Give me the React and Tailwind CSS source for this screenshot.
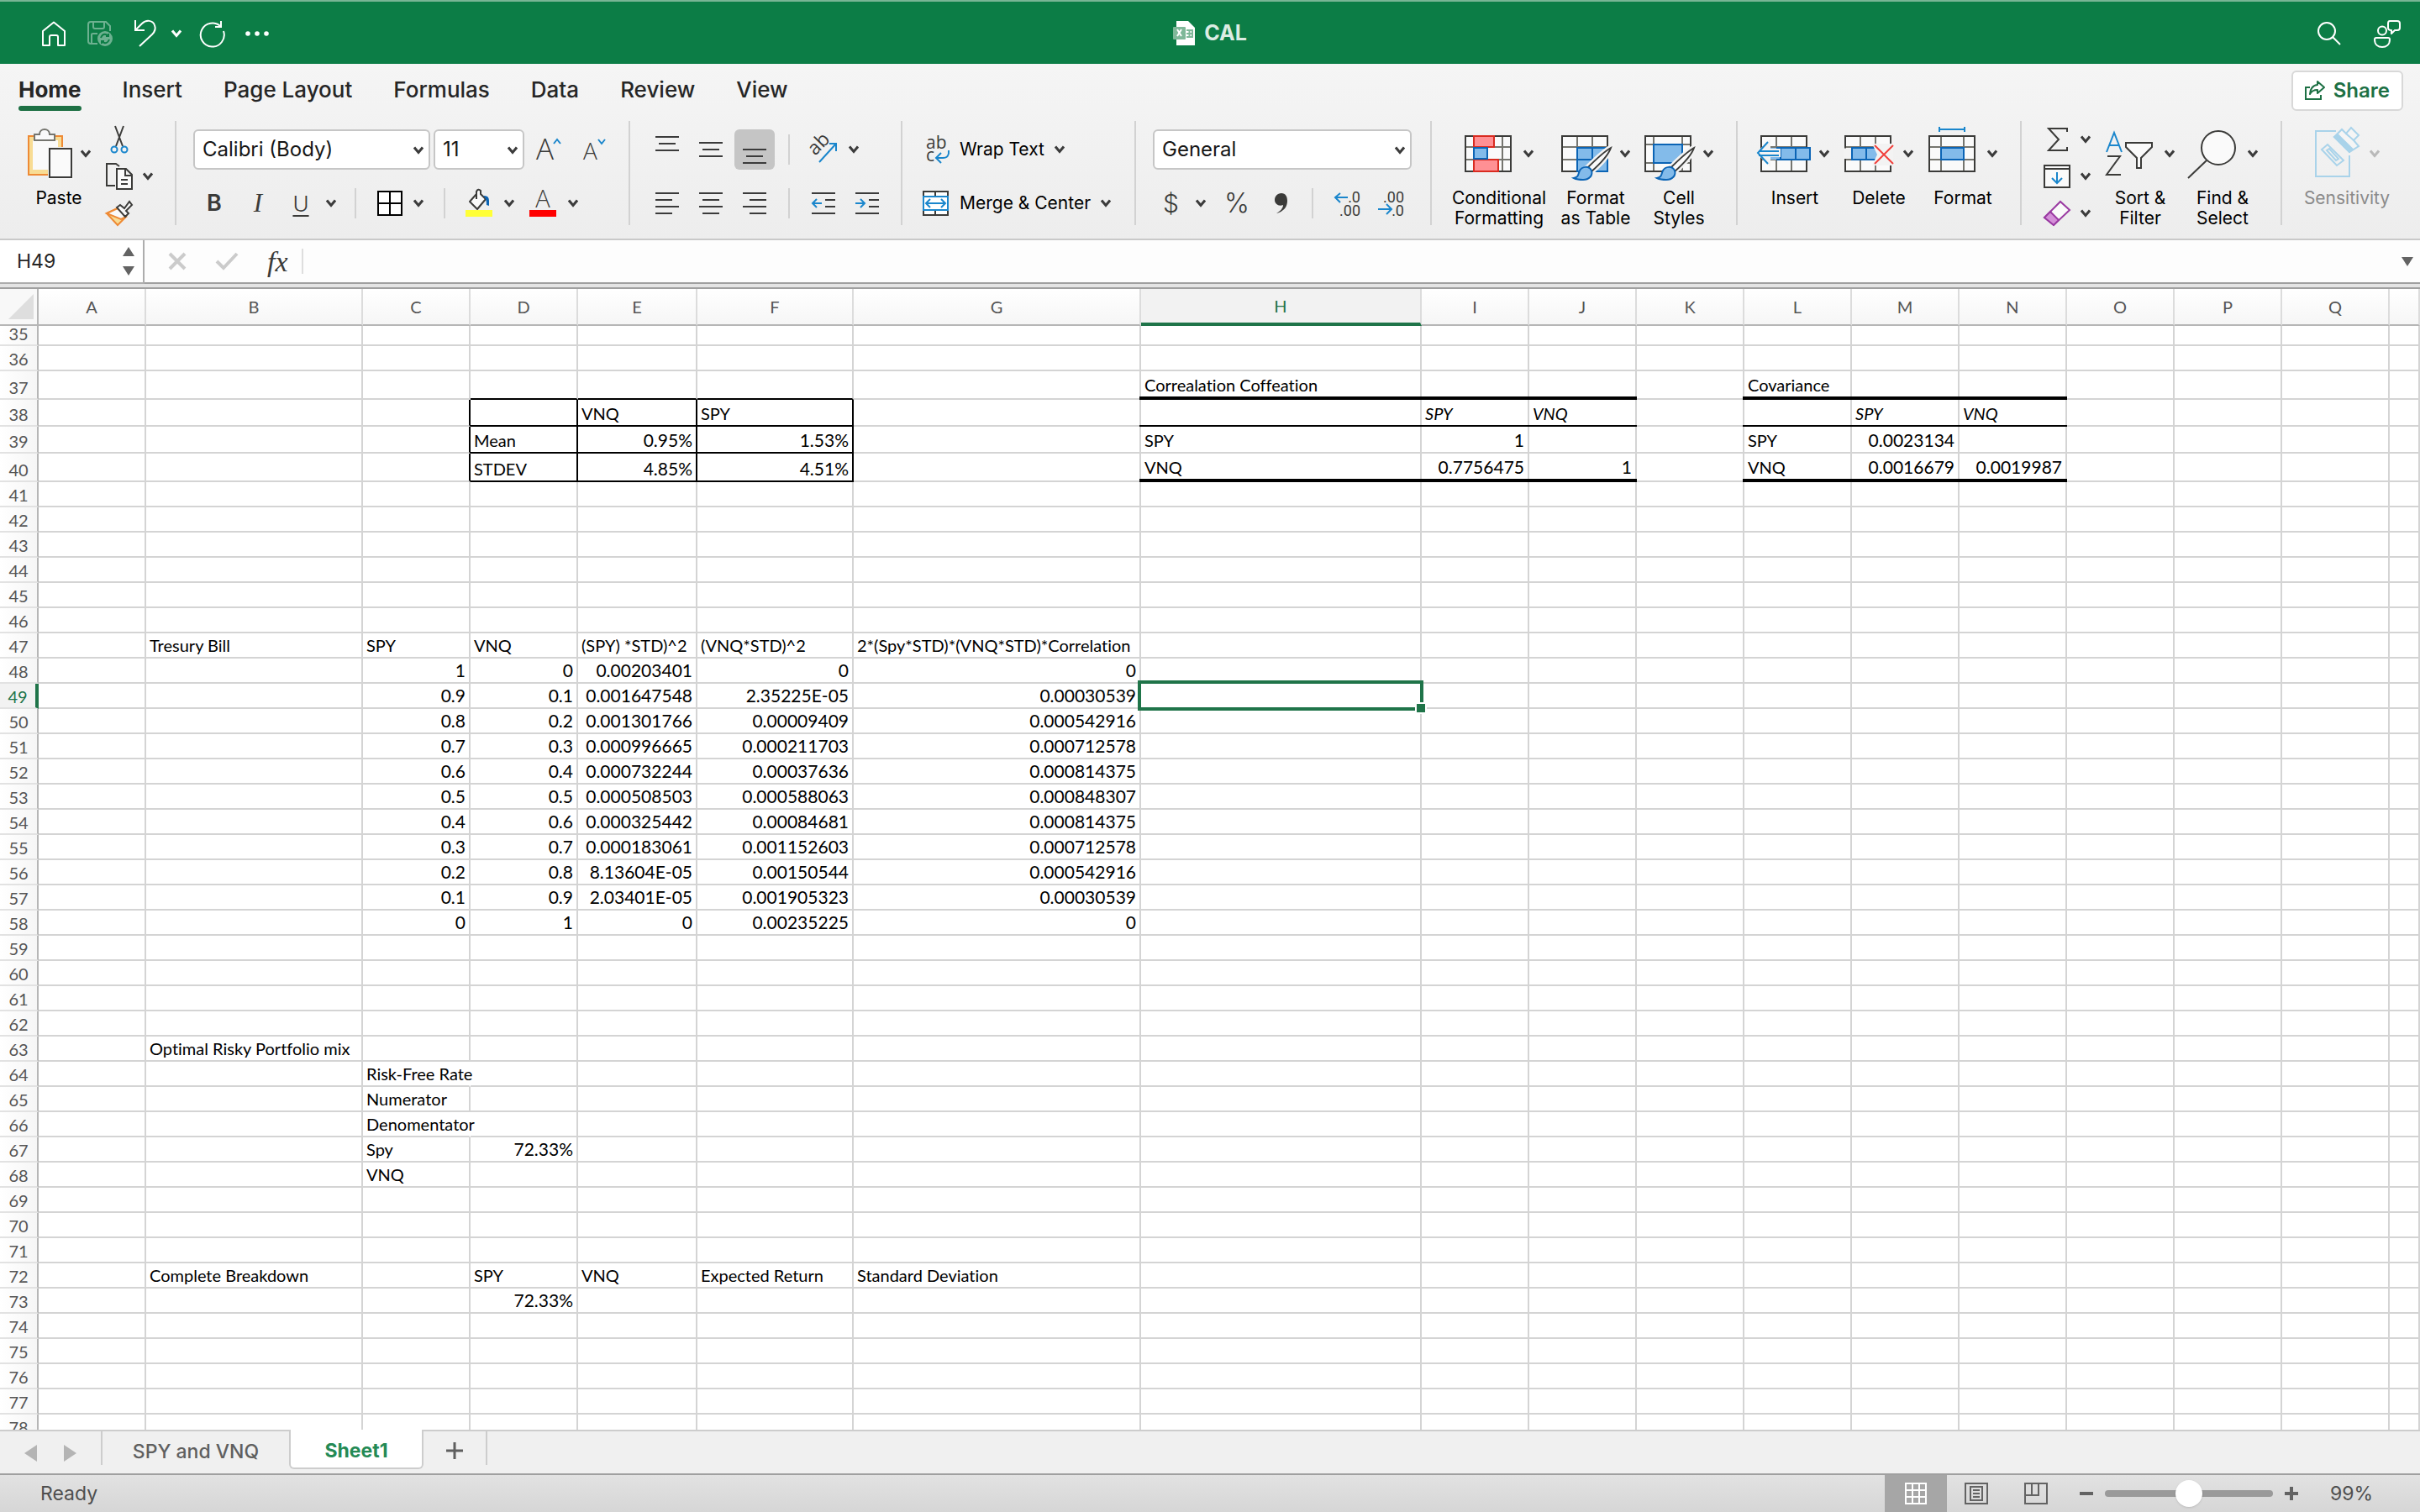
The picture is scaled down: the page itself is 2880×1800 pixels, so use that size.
import clsx from 'clsx';

const COLUMNS = 'ABCDEFGHIJKLMNOPQR'.split('');
const COL_WIDTHS = {
  A: 'w-[128px]', B: 'w-[258px]', C: 'w-[128px]', D: 'w-[128px]', E: 'w-[142px]', F: 'w-[186px]', G: 'w-[342px]', H: 'w-[334px]',
};

const ROWS = Array.from({ length: 44 }, (_, i) => i + 35);
const ROW_HEIGHTS = { 35: 'h-[24px]', 37: 'h-[34px]', 38: 'h-[32px]', 39: 'h-[32px]', 40: 'h-[34px]' };

const CELLS = {
  E38: 'VNQ', F38: 'SPY',
  D39: 'Mean', E39: '0.95%', F39: '1.53%',
  D40: 'STDEV', E40: '4.85%', F40: '4.51%',
  H37: 'Correalation Coffeation', I38: 'SPY', J38: 'VNQ',
  H39: 'SPY', I39: '1', H40: 'VNQ', I40: '0.7756475', J40: '1',
  L37: 'Covariance', M38: 'SPY', N38: 'VNQ',
  L39: 'SPY', M39: '0.0023134', L40: 'VNQ', M40: '0.0016679', N40: '0.0019987',
  B47: 'Tresury Bill', C47: 'SPY', D47: 'VNQ', E47: '(SPY) *STD)^2', F47: '(VNQ*STD)^2', G47: '2*(Spy*STD)*(VNQ*STD)*Correlation',
  B63: 'Optimal Risky Portfolio mix',
  C64: 'Risk-Free Rate', C65: 'Numerator', C66: 'Denomentator', C67: 'Spy', D67: '72.33%', C68: 'VNQ',
  B72: 'Complete Breakdown', D72: 'SPY', E72: 'VNQ', F72: 'Expected Return', G72: 'Standard Deviation', D73: '72.33%',
};

// weights table, rows 48 to 58, columns C to G
const WEIGHTS = [
  ['1', '0', '0.00203401', '0', '0'],
  ['0.9', '0.1', '0.001647548', '2.35225E-05', '0.00030539'],
  ['0.8', '0.2', '0.001301766', '0.00009409', '0.000542916'],
  ['0.7', '0.3', '0.000996665', '0.000211703', '0.000712578'],
  ['0.6', '0.4', '0.000732244', '0.00037636', '0.000814375'],
  ['0.5', '0.5', '0.000508503', '0.000588063', '0.000848307'],
  ['0.4', '0.6', '0.000325442', '0.00084681', '0.000814375'],
  ['0.3', '0.7', '0.000183061', '0.001152603', '0.000712578'],
  ['0.2', '0.8', '8.13604E-05', '0.00150544', '0.000542916'],
  ['0.1', '0.9', '2.03401E-05', '0.001905323', '0.00030539'],
  ['0', '1', '0', '0.00235225', '0'],
];
WEIGHTS.forEach((values, i) => {
  values.forEach((value, j) => {
    CELLS[`${'CDEFG'[j]}${48 + i}`] = value;
  });
});

const SELECTED = { col: 'H', row: 49 };
const SPILLS = ['C64', 'C66'];

function cellBorders(col, row) {
  const boxed = 'DEF'.includes(col);
  const stats = 'HIJLMN'.includes(col);
  let bottom = 'border-b-2 border-b-[#d4d4d4]';
  let right = 'border-r-2 border-r-[#d4d4d4]';
  if (boxed && row >= 37 && row <= 40) bottom = 'border-b-2 border-b-black';
  if ('CDEF'.includes(col) && row >= 38 && row <= 40) right = 'border-r-2 border-r-black';
  // the rules run over the vertical grid lines
  if (stats && (row === 37 || row === 40)) {
    bottom = 'relative border-b-4 border-b-black after:absolute after:-inset-x-[2px] after:-bottom-1 after:h-1 after:bg-black';
  }
  if (stats && row === 38) {
    bottom = 'relative border-b-2 border-b-black after:absolute after:-inset-x-[2px] after:-bottom-[2px] after:h-[2px] after:bg-black';
  }
  if (SPILLS.includes(`${col}${row}`)) right = 'border-r-2 border-r-transparent';
  return `${bottom} ${right}`;
}

function Chevron({ className = 'text-[#3b3b3b]' }) {
  return (
    <svg className={clsx('h-[10px] w-[12px] shrink-0', className)} viewBox="0 0 12 10" fill="none" stroke="currentColor" strokeWidth="3" aria-hidden="true">
      <path d="M1 1.5 6 7.5 11 1.5" />
    </svg>
  );
}

function Icon({ w, h, children, className }) {
  return (
    <svg width={w} height={h} viewBox={`0 0 ${w} ${h}`} fill="none" className={clsx('shrink-0 overflow-visible', className)} aria-hidden="true">
      {children}
    </svg>
  );
}

function Lines({ rows, shift = 0 }) {
  return (
    <Icon w={28} h={26}>
      {rows.map(([x1, x2], i) => (
        <path key={i} d={`M${x1} ${1 + i * 8 + shift}H${x2}`} stroke="#3b3b3b" strokeWidth="2" />
      ))}
    </Icon>
  );
}

function IconButton({ label, className, children }) {
  return (
    <button type="button" aria-label={label} className={clsx('flex shrink-0 items-center justify-center', className)}>
      {children}
    </button>
  );
}

function Separator() {
  return <div className="h-[124px] w-[2px] shrink-0 bg-[#d2d2d2]" />;
}

function SmallSeparator({ className }) {
  return <div className={clsx('h-9 w-[2px] shrink-0 bg-[#d2d2d2]', className)} />;
}

function Dropdown({ label, value, className }) {
  return (
    <div className={clsx('relative shrink-0', className)}>
      <select aria-label={label} defaultValue={value} className="h-12 w-full appearance-none rounded-md border-2 border-[#c6c6c6] bg-white pl-[9px] text-[24px] text-[#161616]">
        <option>{value}</option>
      </select>
      <Chevron className="pointer-events-none absolute top-5 right-2 text-[#3b3b3b]" />
    </div>
  );
}

function BigButton({ lines, icon, width, disabled }) {
  return (
    <button type="button" disabled={disabled} className={clsx('flex shrink-0 flex-col items-center', width, disabled ? 'text-[#8a8a8a]' : 'text-black')}>
      <span className="flex h-[78px] items-center gap-[14px]">
        {icon}
        <Chevron className={disabled ? 'text-[#b9b9b9]' : 'text-[#3b3b3b]'} />
      </span>
      <span className="flex flex-col items-center pt-[2px]">
        {lines.map(line => (
          <span key={line} className="text-[21px] leading-6 whitespace-nowrap">{line}</span>
        ))}
      </span>
    </button>
  );
}

// 56x44 sheet grid shared by the table-like icons
function GridBase({ cols = [19, 37], lines = [26, 41] }) {
  return (
    <>
      <rect x="1" y="13" width="54" height="42" fill="#fafafa" />
      <path d={`${cols.map(x => `M${x} 13V55`).join('')}${lines.map(y => `M1 ${y}H55`).join('')}`} stroke="#75756f" strokeWidth="2" />
      <rect x="1" y="13" width="54" height="42" stroke="#3b3b39" strokeWidth="2" />
    </>
  );
}

function Brush() {
  return (
    <>
      <path d="M59 27C50 32 35 47 30 52l5 4c8-7 21-20 24-29Z" fill="#fafafa" stroke="#f3f3f3" strokeWidth="7" />
      <path d="M59 27C50 32 35 47 30 52l5 4c8-7 21-20 24-29Z" fill="#fafafa" stroke="#3b3b39" strokeWidth="2" />
      <path d="M15 63c6-1 5-5 7-9 3-5 11-6 14 0 2 6-3 11-10 11-5 0-9-1-11-2Z" fill="#83bbea" stroke="#0b64b5" strokeWidth="2" />
    </>
  );
}

const icons = {
  home: (
    <Icon w={28} h={30}>
      <path d="M1 29V12L14 1.500 27 12V29H19V19q0-2-2-2h-6q-2 0-2 2V29Z" stroke="#fff" strokeWidth="2" strokeLinejoin="round" />
    </Icon>
  ),
  save: (
    <Icon w={30} h={30} className="opacity-40">
      <path d="M12 27H4q-3 0-3-3V4q0-3 3-3H22l5 5V12M7 1V7q0 2 2 2h9q2 0 2-2V1M5 27V16q0-1 2-1h5" stroke="#fff" strokeWidth="2" />
      <circle cx="21" cy="21" r="9" fill="#fff" />
      <path d="M16 20q2-5 6-4l3 2m0-3v3h-3M26 22q-2 5-6 4l-3-2m0 3v-3h3" stroke="#0c7d46" strokeWidth="2" />
    </Icon>
  ),
  undo: (
    <Icon w={26} h={32}>
      <path d="M1 0V12H12M1 12 9 4C14-1 22 0 24 6c2 5 0 8-3 11L6 31" stroke="#fff" strokeWidth="2" />
    </Icon>
  ),
  redo: (
    <Icon w={32} h={32}>
      <path d="M20 8h7V1M27 8A14 14 0 1 0 30 13" stroke="#fff" strokeWidth="2" />
    </Icon>
  ),
  dots: (
    <Icon w={28} h={6}>
      {[3, 14, 25].map(x => <circle key={x} cx={x} cy="3" r="2.800" fill="#fff" />)}
    </Icon>
  ),
  workbook: (
    <Icon w={26} h={30}>
      <path d="M4 0H18L26 8V29H4Z" fill="#fff" />
      <path d="M16 11h7v8h-7M16 15h7M19.500 11v8" stroke="#7fb899" strokeWidth="2" />
      <rect x="0" y="7" width="15" height="15" rx="1" fill="#7fb899" />
      <path d="M5 10l5 8M10 10l-5 8" stroke="#fff" strokeWidth="2" />
    </Icon>
  ),
  search: (
    <Icon w={28} h={28}>
      <circle cx="11" cy="11" r="10" stroke="#fff" strokeWidth="2" />
      <path d="M18 18 27 27" stroke="#fff" strokeWidth="2" />
    </Icon>
  ),
  person: (
    <Icon w={34} h={33}>
      <circle cx="11" cy="12.500" r="5" stroke="#fff" strokeWidth="2" />
      <path d="M4 21H18q2 0 2 2c0 6-4 9-9 9s-9-3-9-9q0-2 2-2ZM20 1h9q3 0 3 3v5q0 3-3 3h-3l-4 4V12q-4 0-4-3V4q0-3 2-3Z" stroke="#fff" strokeWidth="2" strokeLinejoin="round" />
    </Icon>
  ),
  share: (
    <Icon w={24} h={24}>
      <path d="M6 8H1V22H19V17" stroke="#1d7044" strokeWidth="2" />
      <path d="M15 1l8 7-8 7V11c-4 0-7 1-9 5 0-6 4-11 9-11Z" stroke="#1d7044" strokeWidth="2" strokeLinejoin="round" />
    </Icon>
  ),
  paste: (
    <Icon w={50} h={62}>
      <rect x="2" y="10" width="40" height="46" fill="#f8dc94" stroke="#ee8a35" strokeWidth="2" />
      <rect x="7" y="15" width="30" height="35" fill="#fafafa" />
      <path d="M9 15V8h6c0-8 12-8 12 0h6v7Z" fill="#fafafa" stroke="#75756f" strokeWidth="2" />
      <path d="M25 23H56V62H25Z" fill="#f3f3f3" />
      <rect x="27" y="25" width="26" height="34" fill="#fafafa" stroke="#3b3b39" strokeWidth="2" />
    </Icon>
  ),
  cut: (
    <Icon w={20} h={32}>
      <path d="M5 0 14 24M15 0 6 24" stroke="#3b3b39" strokeWidth="2" />
      <circle cx="4" cy="28" r="3.500" stroke="#1a86cc" strokeWidth="2" />
      <circle cx="16" cy="28" r="3.500" stroke="#1a86cc" strokeWidth="2" />
    </Icon>
  ),
  copy: (
    <Icon w={32} h={32}>
      <path d="M11 27H1V1H12L16 4" stroke="#3b3b39" strokeWidth="2" />
      <path d="M13 7H24L31 14V31H13ZM23 7V15H31M18 20h8M18 25h8" fill="#fafafa" stroke="#3b3b39" strokeWidth="2" />
    </Icon>
  ),
  painter: (
    <Icon w={32} h={30}>
      <path d="M1 15 14 9 24 19 14 29Z" fill="#f8dc94" stroke="#ee8a35" strokeWidth="2" />
      <path d="M1 15 14 9 24 19 18 22Z" fill="#fafafa" stroke="#ee8a35" strokeWidth="2" />
      <path d="M13 8l4-3 5 4L28 1l3 4-7 7 3 3-4 4Z" fill="#fafafa" stroke="#3b3b39" strokeWidth="2" />
    </Icon>
  ),
  grow: (
    <Icon w={30} h={28}>
      <text x="0" y="26" fontSize="35" fontWeight="300" fontFamily="Open Sans, sans-serif" fill="#3b3b39">A</text>
      <path d="M21 7 25 2 29 7" stroke="#1a86cc" strokeWidth="2" />
    </Icon>
  ),
  shrink: (
    <Icon w={28} h={28}>
      <text x="0" y="26" fontSize="28" fontWeight="300" fontFamily="Open Sans, sans-serif" fill="#3b3b39">A</text>
      <path d="M18 2 22 7 26 2" stroke="#1a86cc" strokeWidth="2" />
    </Icon>
  ),
  borders: (
    <Icon w={32} h={30}>
      <path d="M2 1H30V29H2ZM16 1V29M2 15H30" fill="#fff" stroke="#000" strokeWidth="2" />
    </Icon>
  ),
  fill: (
    <Icon w={32} h={34}>
      <path d="M13 6 5 15 14 24 24 12 18 6V2q-3-3-5 1v9" fill="#fafafa" stroke="#3b3b39" strokeWidth="2" strokeLinejoin="round" />
      <path d="M21 8q7-1 7 6v6l-3-1q0-6-2-9Z" fill="#0b64b5" />
      <rect x="0" y="25" width="32" height="8" fill="#ffff37" />
    </Icon>
  ),
  fontColor: (
    <Icon w={32} h={34}>
      <text x="16" y="22" textAnchor="middle" fontSize="29" fontWeight="300" fontFamily="Open Sans, sans-serif" fill="#3b3b39">A</text>
      <rect x="0" y="25" width="32" height="8" fill="#f00" />
    </Icon>
  ),
  orientation: (
    <Icon w={32} h={32}>
      <text x="6" y="24" fontSize="23" fontFamily="Open Sans, sans-serif" fill="#3b3b39" transform="rotate(-45 6 24)">ab</text>
      <path d="M11 31 31 9M23 9h8v9" stroke="#1a86cc" strokeWidth="2" />
    </Icon>
  ),
  outdent: (
    <Icon w={28} h={26}>
      <path d="M0 1H28M16 9H28M16 17H28M0 25H28" stroke="#3b3b3b" strokeWidth="2" />
      <path d="M12 13H1M6 8 1 13 6 18" stroke="#1a86cc" strokeWidth="2" />
    </Icon>
  ),
  indent: (
    <Icon w={28} h={26}>
      <path d="M0 1H28M16 9H28M16 17H28M0 25H28" stroke="#3b3b3b" strokeWidth="2" />
      <path d="M0 13H11M6 8l5 5-5 5" stroke="#1a86cc" strokeWidth="2" />
    </Icon>
  ),
  wrap: (
    <Icon w={32} h={32}>
      <text fontSize="21" fontFamily="Open Sans, sans-serif" fill="#3b3b39">
        <tspan x="4" y="15">ab</tspan>
        <tspan x="4" y="30">c</tspan>
      </text>
      <path d="M31 17q1 9-7 9h-7M22 20l-6 6 6 6" stroke="#1a86cc" strokeWidth="2" />
    </Icon>
  ),
  merge: (
    <Icon w={32} h={30}>
      <path d="M1 1H30V29H1ZM15 1V7M15 23V29" fill="#fff" stroke="#3b3b39" strokeWidth="2" />
      <rect x="1" y="7" width="29" height="16" fill="#fff" stroke="#1a86cc" strokeWidth="2" />
      <path d="M5 15H26M9 10l-5 5 5 5M22 10l5 5-5 5" stroke="#1a86cc" strokeWidth="2" />
    </Icon>
  ),
  comma: (
    <Icon w={16} h={26}>
      <path d="M8 1c5 0 7 4 7 9 0 8-5 13-13 15 5-3 8-6 8-10-5 2-10-1-10-6 0-4 3-8 8-8Z" fill="#3b3b39" />
    </Icon>
  ),
  moreDecimals: (
    <Icon w={32} h={32}>
      <g fontSize="18" fontFamily="Roboto, sans-serif" fill="#3b3b39" textAnchor="end">
        <text x="32" y="15">.0</text>
        <text x="32" y="31">.00</text>
      </g>
      <path d="M17 9H2M8 4 2 9l6 6" stroke="#1a86cc" strokeWidth="2" />
    </Icon>
  ),
  lessDecimals: (
    <Icon w={32} h={32}>
      <g fontSize="18" fontFamily="Roboto, sans-serif" fill="#3b3b39" textAnchor="end">
        <text x="32" y="15">.00</text>
        <text x="32" y="31">.0</text>
      </g>
      <path d="M1 23H16M11 17l6 6-6 6" stroke="#1a86cc" strokeWidth="2" />
    </Icon>
  ),
  conditional: (
    <Icon w={56} h={68}>
      <GridBase cols={[11, 45]} />
      <path d="M11 13H35V26H11ZM11 41H40V55H11Z" fill="#ff9094" stroke="#d92b20" strokeWidth="2" />
      <path d="M11 27H27V40H11Z" fill="#83bbea" stroke="#0b64b5" strokeWidth="2" />
    </Icon>
  ),
  formatTable: (
    <Icon w={56} h={68}>
      <GridBase />
      <path d="M19 27H55V55H19ZM37 27V55M19 41H55" fill="#83bbea" stroke="#0b64b5" strokeWidth="2" />
      <Brush />
    </Icon>
  ),
  cellStyles: (
    <Icon w={56} h={68}>
      <GridBase cols={[11, 45]} lines={[23, 45]} />
      <rect x="11" y="23" width="34" height="22" fill="#83bbea" stroke="#0b64b5" strokeWidth="2" />
      <Brush />
    </Icon>
  ),
  insert: (
    <Icon w={56} h={68}>
      <GridBase />
      <path d="M10 27H59V41H10Z" fill="#83bbea" />
      <path d="M19 27H59V41H19M24 27V41M42 27V41" stroke="#0b64b5" strokeWidth="2" />
      <path d="M12 16-5 33 12 50V38H24V28H12Z" fill="#f3f3f3" />
      <path d="M9 20-3 33 9 46M-2 31H22M-2 36H22" stroke="#1a86cc" strokeWidth="2" />
    </Icon>
  ),
  remove: (
    <Icon w={56} h={68}>
      <GridBase />
      <path d="M-1 27.500H10V40H-1Z" fill="#f3f3f3" />
      <path d="M9 27H40V41H9ZM26 27V41" fill="#83bbea" stroke="#0b64b5" strokeWidth="2" />
      <path d="M33 22H58V48H33L39 35Z" fill="#f3f3f3" />
      <path d="M36 24 58 46M58 24 36 46" stroke="#f0403c" strokeWidth="2" />
    </Icon>
  ),
  format: (
    <Icon w={56} h={68}>
      <GridBase cols={[15, 42]} />
      <rect x="15" y="27" width="27" height="14" fill="#83bbea" stroke="#0b64b5" strokeWidth="2" />
      <path d="M13 5H43M13 2V8M43 2V8" stroke="#1a86cc" strokeWidth="2" />
    </Icon>
  ),
  sum: (
    <Icon w={32} h={30}>
      <path d="M28 6V2H6L18 15 6 28H28V24" stroke="#3b3b39" strokeWidth="2" />
    </Icon>
  ),
  fillDown: (
    <Icon w={32} h={28}>
      <path d="M1 1H31V27H1ZM1 5H31" fill="#fafafa" stroke="#3b3b39" strokeWidth="2" />
      <path d="M16 9V22M10 16l6 6 6-6" stroke="#1a86cc" strokeWidth="2" />
    </Icon>
  ),
  clear: (
    <Icon w={32} h={30}>
      <path d="M1 20 20 1 31 11 12 29Z" fill="#fafafa" stroke="#9a3aa2" strokeWidth="2" />
      <path d="M1 20 8 13 18 23 12 29Z" fill="#d48fd8" stroke="#9a3aa2" strokeWidth="2" />
    </Icon>
  ),
  sort: (
    <Icon w={56} h={68}>
      <path d="M1 32 10 9 19 32M4 24H16" stroke="#1a86cc" strokeWidth="2" />
      <path d="M2 37H17L1 59H18" stroke="#3b3b39" strokeWidth="2" />
      <path d="M24 21H55V26L42 39V51H37V39L24 26Z" fill="#fafafa" stroke="#3b3b39" strokeWidth="2" />
    </Icon>
  ),
  find: (
    <Icon w={58} h={68}>
      <circle cx="37" cy="27" r="20" fill="#fafafa" stroke="#3b3b39" strokeWidth="2" />
      <path d="M23 42 1 63" stroke="#3b3b39" strokeWidth="2" />
    </Icon>
  ),
  sensitivity: (
    <Icon w={52} h={68}>
      <path d="M26 7H2V61H42V36" stroke="#a9d3ea" strokeWidth="2" />
      <path d="M9 29 16 23 35 42 27 48ZM15 30 18 28 29 40 26 42Z" stroke="#a9d3ea" strokeWidth="2" />
      <path d="M24 14 33 5 38 10 44 3 53 12 47 18 53 25 42 32Z" fill="#f5f5f5" stroke="#a9d3ea" strokeWidth="2" />
      <path d="M24 14 28 11 46 29 42 32ZM38 10 47 18" fill="#a9d3ea" stroke="#a9d3ea" strokeWidth="2" />
    </Icon>
  ),
};

const TABS = ['Home', 'Insert', 'Page Layout', 'Formulas', 'Data', 'Review', 'View'];

function TitleBar() {
  return (
    <header className="grid h-[76px] shrink-0 grid-cols-[1fr_auto_1fr] items-center border-t-2 border-[#79b595] bg-[#0c7d46] pt-[2px]">
      <div className="flex items-center pl-[50px]">
        <IconButton label="Home">{icons.home}</IconButton>
        <IconButton label="Save" className="ml-[26px]">{icons.save}</IconButton>
        <IconButton label="Undo" className="ml-[26px] gap-[18px]">{icons.undo}<Chevron className="text-white" /></IconButton>
        <IconButton label="Redo" className="ml-5">{icons.redo}</IconButton>
        <IconButton label="More" className="ml-6">{icons.dots}</IconButton>
      </div>
      <h1 className="flex items-center gap-[11px] text-[25px] font-bold text-[#dcece3]">{icons.workbook}CAL</h1>
      <div className="flex items-center justify-end gap-[38px] pr-[22px]">
        <IconButton label="Search">{icons.search}</IconButton>
        <IconButton label="Comments">{icons.person}</IconButton>
      </div>
    </header>
  );
}

function RibbonTabs() {
  return (
    <div className="flex h-[64px] shrink-0 items-start justify-between pr-5 pl-[22px]">
      <nav className="flex gap-[49px]">
        {TABS.map((tab, i) => (
          <button
            key={tab}
            type="button"
            className={clsx('relative h-[60px] text-[26px] text-[#262626]', i === 0 ? 'font-bold' : 'font-medium')}
          >
            {tab}
            {i === 0 && <span className="absolute inset-x-0 bottom-1 h-[6px] rounded-full bg-[#1d7044]" />}
          </button>
        ))}
      </nav>
      <button type="button" className="mt-2 flex h-12 items-center gap-[10px] rounded-md border-2 border-[#d8d8d8] bg-white px-[14px] text-[24px] font-semibold text-[#1d7044]">
        {icons.share}Share
      </button>
    </div>
  );
}

function Ribbon() {
  return (
    <div className="flex h-[146px] shrink-0 items-start border-b-2 border-[#c9c9c9] pt-1">
      <div className="flex w-[208px] shrink-0 pl-[23px]">
        <BigButton lines={['Paste']} icon={icons.paste} width="w-[94px]" />
        <div className="ml-[9px] flex flex-col">
          <IconButton label="Cut" className="h-[44px] w-8">{icons.cut}</IconButton>
          <IconButton label="Copy" className="h-[44px] gap-3">{icons.copy}<Chevron /></IconButton>
          <IconButton label="Format Painter" className="h-[44px] w-8">{icons.painter}</IconButton>
        </div>
      </div>
      <Separator />

      <div className="flex w-[538px] shrink-0 flex-col gap-4 pt-[10px]">
        <div className="flex items-center pl-5">
          <Dropdown label="Font" value="Calibri (Body)" className="w-[282px]" />
          <Dropdown label="Font size" value="11" className="ml-1 w-[108px]" />
          <IconButton label="Increase font size" className="ml-[14px]">{icons.grow}</IconButton>
          <IconButton label="Decrease font size" className="ml-[26px]">{icons.shrink}</IconButton>
        </div>
        <div className="flex h-12 items-center pl-[19px] text-[#3b3b39]">
          <IconButton label="Bold" className="w-[52px] text-[27px] font-semibold">B</IconButton>
          <IconButton label="Italic" className="w-[52px] font-['Liberation_Serif',serif] text-[31px] italic">I</IconButton>
          <IconButton label="Underline" className="w-[50px] text-[26px] font-light underline decoration-2 underline-offset-4">U</IconButton>
          <IconButton label="Underline style" className="w-[22px]"><Chevron /></IconButton>
          <SmallSeparator className="ml-[17px]" />
          <IconButton label="Borders" className="ml-6 gap-3">{icons.borders}<Chevron /></IconButton>
          <SmallSeparator className="ml-6" />
          <IconButton label="Fill color" className="ml-6 gap-[14px]">{icons.fill}<Chevron /></IconButton>
          <IconButton label="Font color" className="ml-[18px] gap-[14px]">{icons.fontColor}<Chevron /></IconButton>
        </div>
      </div>
      <Separator />

      <div className="flex w-[322px] shrink-0 flex-col gap-4 pt-[10px] pl-5">
        <div className="flex h-12 items-center gap-1">
          <IconButton label="Top align" className="h-12 w-12"><Lines rows={[[0, 28], [4, 24], [0, 28]]} shift={-3} /></IconButton>
          <IconButton label="Middle align" className="h-12 w-12"><Lines rows={[[0, 28], [4, 24], [0, 28]]} shift={4} /></IconButton>
          <IconButton label="Bottom align" className="h-12 w-12 rounded-md bg-[#c5c5c5]"><Lines rows={[[0, 28], [4, 24], [0, 28]]} shift={12} /></IconButton>
          <SmallSeparator className="ml-3" />
          <IconButton label="Orientation" className="ml-5 gap-[14px]">{icons.orientation}<Chevron /></IconButton>
        </div>
        <div className="flex h-12 items-center gap-1">
          <IconButton label="Align left" className="h-12 w-12"><Lines rows={[[0, 28], [0, 20], [0, 28], [0, 20]]} /></IconButton>
          <IconButton label="Center" className="h-12 w-12"><Lines rows={[[0, 28], [4, 24], [0, 28], [4, 24]]} /></IconButton>
          <IconButton label="Align right" className="h-12 w-12"><Lines rows={[[0, 28], [8, 28], [0, 28], [8, 28]]} /></IconButton>
          <SmallSeparator className="ml-3" />
          <IconButton label="Decrease indent" className="ml-3 h-12 w-12">{icons.outdent}</IconButton>
          <IconButton label="Increase indent" className="h-12 w-12">{icons.indent}</IconButton>
        </div>
      </div>
      <Separator />

      <div className="flex w-[276px] shrink-0 flex-col items-start gap-4 pt-[10px] pl-6 text-[21px] text-black">
        <button type="button" className="flex h-12 items-center gap-3 whitespace-nowrap">{icons.wrap}Wrap Text<Chevron /></button>
        <button type="button" className="flex h-12 items-center gap-3 whitespace-nowrap">{icons.merge}Merge &amp; Center<Chevron /></button>
      </div>
      <Separator />

      <div className="flex w-[350px] shrink-0 flex-col gap-4 pt-[10px] pl-5">
        <Dropdown label="Number format" value="General" className="w-[308px]" />
        <div className="flex h-12 items-center pl-3 text-[#3b3b39]">
          <IconButton label="Currency" className="gap-5 text-[30px] font-light">$<Chevron /></IconButton>
          <IconButton label="Percent" className="ml-5 w-[34px] text-[32px] font-light">%</IconButton>
          <IconButton label="Comma style" className="ml-7">{icons.comma}</IconButton>
          <SmallSeparator className="ml-7" />
          <IconButton label="Increase decimal" className="ml-6">{icons.moreDecimals}</IconButton>
          <IconButton label="Decrease decimal" className="ml-5">{icons.lessDecimals}</IconButton>
        </div>
      </div>
      <Separator />

      <div className="flex w-[362px] shrink-0 items-start pl-[22px]">
        <BigButton lines={['Conditional', 'Formatting']} icon={icons.conditional} width="w-[116px]" />
        <BigButton lines={['Format', 'as Table']} icon={icons.formatTable} width="w-[114px]" />
        <BigButton lines={['Cell', 'Styles']} icon={icons.cellStyles} width="w-[84px]" />
      </div>
      <Separator />

      <div className="flex w-[336px] shrink-0 items-start pl-[18px]">
        <BigButton lines={['Insert']} icon={icons.insert} width="w-[100px]" />
        <BigButton lines={['Delete']} icon={icons.remove} width="w-[100px]" />
        <BigButton lines={['Format']} icon={icons.format} width="w-[100px]" />
      </div>
      <Separator />

      <div className="flex w-[308px] shrink-0 items-start pl-[26px]">
        <div className="flex flex-col">
          <IconButton label="AutoSum" className="h-[44px] gap-3">{icons.sum}<Chevron /></IconButton>
          <IconButton label="Fill" className="h-[44px] gap-3">{icons.fillDown}<Chevron /></IconButton>
          <IconButton label="Clear" className="h-[44px] gap-3">{icons.clear}<Chevron /></IconButton>
        </div>
        <BigButton lines={['Sort &', 'Filter']} icon={icons.sort} width="ml-[10px] w-[98px]" />
        <BigButton lines={['Find &', 'Select']} icon={icons.find} width="w-[98px]" />
      </div>
      <Separator />

      <div className="flex shrink-0 items-start pl-[22px]">
        <BigButton lines={['Sensitivity']} icon={icons.sensitivity} width="w-[110px]" disabled />
      </div>
    </div>
  );
}

function FormulaBar() {
  return (
    <div className="flex h-[58px] shrink-0 items-stretch border-b-2 border-[#a0a0a0] bg-[#e4e4e4] pb-1">
      <div className="flex w-[172px] shrink-0 items-center justify-between border-r-2 border-b-2 border-[#adadad] bg-white pr-[10px]">
        <input aria-label="Name box" defaultValue="H49" className="w-[100px] bg-transparent pl-5 text-[23px] text-[#262626]" />
        <Icon w={14} h={34}>
          <path d="M0 11 7 0 14 11ZM0 23 7 34 14 23Z" fill="#636363" />
        </Icon>
      </div>
      <div className="flex flex-1 items-center border-b-2 border-[#a0a0a0] bg-[#fdfdfd] pr-2 pl-7">
        <IconButton label="Cancel">
          <Icon w={22} h={22}><path d="M2 2 20 20M20 2 2 20" stroke="#cbcbcb" strokeWidth="4" /></Icon>
        </IconButton>
        <IconButton label="Enter" className="ml-[34px]">
          <Icon w={28} h={22}><path d="M2 11 10 19 26 2" stroke="#cbcbcb" strokeWidth="4" /></Icon>
        </IconButton>
        <IconButton label="Insert function" className="ml-[34px] font-['Liberation_Serif',serif] text-[34px] text-[#3b3b39] italic">fx</IconButton>
        <div className="ml-4 h-[30px] w-[2px] bg-[#dedede]" />
        <input aria-label="Formula" className="mx-4 h-full flex-1 bg-transparent text-[23px]" />
        <IconButton label="Expand formula bar">
          <Icon w={14} h={11}><path d="M0 0H14L7 11Z" fill="#636363" /></Icon>
        </IconButton>
      </div>
    </div>
  );
}

function Sheet() {
  return (
    <main className="min-h-0 flex-1 overflow-hidden bg-white font-['Lato',sans-serif] text-[20px] leading-6 [font-variant-ligatures:none]">
      <table className="w-full table-fixed border-separate border-spacing-0">
        <colgroup>
          <col className="w-[46px]" />
          {COLUMNS.map(col => <col key={col} className={col === 'R' ? '' : COL_WIDTHS[col] || 'w-[128px]'} />)}
        </colgroup>
        <thead>
          <tr className="h-[44px]">
            <th aria-label="Select all" className="border-r-2 border-b-2 border-[#b6b6b6] bg-[#f8f8f8] p-0">
              <Icon w={30} h={30} className="ml-[10px]"><path d="M30 0V30H0Z" fill="#dedede" /></Icon>
            </th>
            {COLUMNS.map(col => (
              <th
                key={col}
                scope="col"
                className={clsx(
                  'border-r-2 border-r-[#dcdcdc] p-0 text-[20px] font-normal',
                  col === SELECTED.col
                    ? 'border-b-4 border-b-[#1f7449] bg-[#f2f2f2] text-[#1f7449]'
                    : 'border-b-2 border-b-[#b6b6b6] bg-linear-to-b from-white to-[#f6f6f6] text-[#555]',
                )}
              >
                {col === 'R' ? '' : col}
              </th>
            ))}
          </tr>
        </thead>
        <tbody>
          {ROWS.map(row => (
            <tr key={row} className={ROW_HEIGHTS[row] || 'h-[30px]'}>
              <th
                scope="row"
                className={clsx(
                  'border-b-2 border-b-[#e2e2e2] p-0 align-bottom font-normal',
                  row === SELECTED.row
                    ? 'border-r-4 border-r-[#1f7449] bg-[#f2f2f2] text-[#1f7449]'
                    : 'border-r-2 border-r-[#b6b6b6] bg-linear-to-r from-white to-[#f6f6f6] text-[#555]',
                )}
              >
                <div className="h-[22px] text-[20px] leading-[18px]">{row}</div>
              </th>
              {COLUMNS.map(col => {
                const value = CELLS[`${col}${row}`] || '';
                const numeric = /^\d[\d.]*(%|E-\d+)?$/.test(value);
                const selected = col === SELECTED.col && row === SELECTED.row;
                return (
                  <td
                    key={col}
                    className={clsx(
                      'px-1 pb-[2px] align-bottom whitespace-nowrap text-black',
                      cellBorders(col, row),
                      numeric && 'text-right text-[21px]',
                      row === 38 && 'IJMN'.includes(col) && 'italic',
                      selected && 'relative',
                    )}
                  >
                    {value}
                    {selected && (
                      <>
                        <span className="absolute -inset-1 border-4 border-[#1f7449]" />
                        <span className="absolute -right-2 -bottom-2 h-[14px] w-[14px] border-2 border-white bg-[#1f7449]" />
                      </>
                    )}
                  </td>
                );
              })}
            </tr>
          ))}
        </tbody>
      </table>
    </main>
  );
}

function SheetTabs() {
  return (
    <div className="flex h-[54px] shrink-0 items-start border-b-2 border-[#a0a0a0] bg-[#f0f0f0] text-[23px]">
      <div className="flex h-[42px] w-[122px] items-end border-t-2 border-r-2 border-[#cdcdcd] pl-[29px]">
        <IconButton label="Previous sheet" className="pb-1"><Icon w={15} h={20}><path d="M15 0V20L0 10Z" fill="#b4b4b4" /></Icon></IconButton>
        <IconButton label="Next sheet" className="ml-8 pb-1"><Icon w={15} h={20}><path d="M0 0V20L15 10Z" fill="#b4b4b4" /></Icon></IconButton>
      </div>
      <button type="button" className="h-[50px] w-[222px] border-t-2 border-[#cdcdcd] font-medium text-[#5f5f5f]">SPY and VNQ</button>
      <button type="button" className="h-[47px] w-[160px] rounded-b-md border-x-2 border-b-2 border-[#cdcdcd] bg-white pt-[5px] font-bold text-[#248a55]">Sheet1</button>
      <div className="h-[42px] w-[76px] border-t-2 border-r-2 border-[#cdcdcd]">
        <IconButton label="Add sheet" className="h-[46px] w-full">
          <Icon w={20} h={20}><path d="M10 0V20M0 10H20" stroke="#5f5f5f" strokeWidth="3" /></Icon>
        </IconButton>
      </div>
      <div className="h-[2px] flex-1 bg-[#cdcdcd]" />
    </div>
  );
}

function StatusBar() {
  return (
    <footer className="flex h-[44px] shrink-0 items-center bg-linear-to-b from-[#e2e2e2] to-[#d6d6d6] pr-14 pl-12 text-[23px] text-[#4f4f4f]">
      <span className="flex-1">Ready</span>
      <IconButton label="Normal view" className="h-full w-[74px] bg-[#a6a6a6]">
        <Icon w={26} h={26}>
          <path d="M1 1H25V25H1ZM9 1V25M17 1V25M1 9H25M1 17H25" stroke="#fff" strokeWidth="2" />
        </Icon>
      </IconButton>
      <IconButton label="Page layout view" className="h-full w-[70px]">
        <Icon w={28} h={26}>
          <path d="M1 1H27V25H1ZM7 5H21V21H7ZM10 9H18M10 13H18M10 17H18" stroke="#636363" strokeWidth="2" />
        </Icon>
      </IconButton>
      <IconButton label="Page break view" className="h-full w-[72px]">
        <Icon w={28} h={26}>
          <path d="M1 1H27V25H1ZM9 1V15M17 1V15H1" stroke="#636363" strokeWidth="2" />
        </Icon>
      </IconButton>
      <IconButton label="Zoom out" className="ml-4">
        <Icon w={16} h={16}><path d="M0 8H16" stroke="#636363" strokeWidth="4" /></Icon>
      </IconButton>
      <input
        type="range"
        aria-label="Zoom"
        defaultValue="50"
        className="mx-[14px] h-2 w-[200px] appearance-none rounded-full bg-[#9a9a9a] [&::-webkit-slider-thumb]:h-8 [&::-webkit-slider-thumb]:w-8 [&::-webkit-slider-thumb]:appearance-none [&::-webkit-slider-thumb]:rounded-full [&::-webkit-slider-thumb]:bg-white [&::-webkit-slider-thumb]:shadow"
      />
      <IconButton label="Zoom in">
        <Icon w={16} h={16}><path d="M0 8H16M8 0V16" stroke="#636363" strokeWidth="4" /></Icon>
      </IconButton>
      <span className="ml-[38px]">99%</span>
    </footer>
  );
}

export default function App() {
  return (
    <div className="flex h-screen flex-col overflow-hidden bg-[#f2f2f2] font-['Inter',sans-serif]">
      <TitleBar />
      <div className="shrink-0 bg-linear-to-b from-[#f5f5f5] to-[#ededed]">
        <RibbonTabs />
        <Ribbon />
      </div>
      <FormulaBar />
      <Sheet />
      <SheetTabs />
      <StatusBar />
    </div>
  );
}
